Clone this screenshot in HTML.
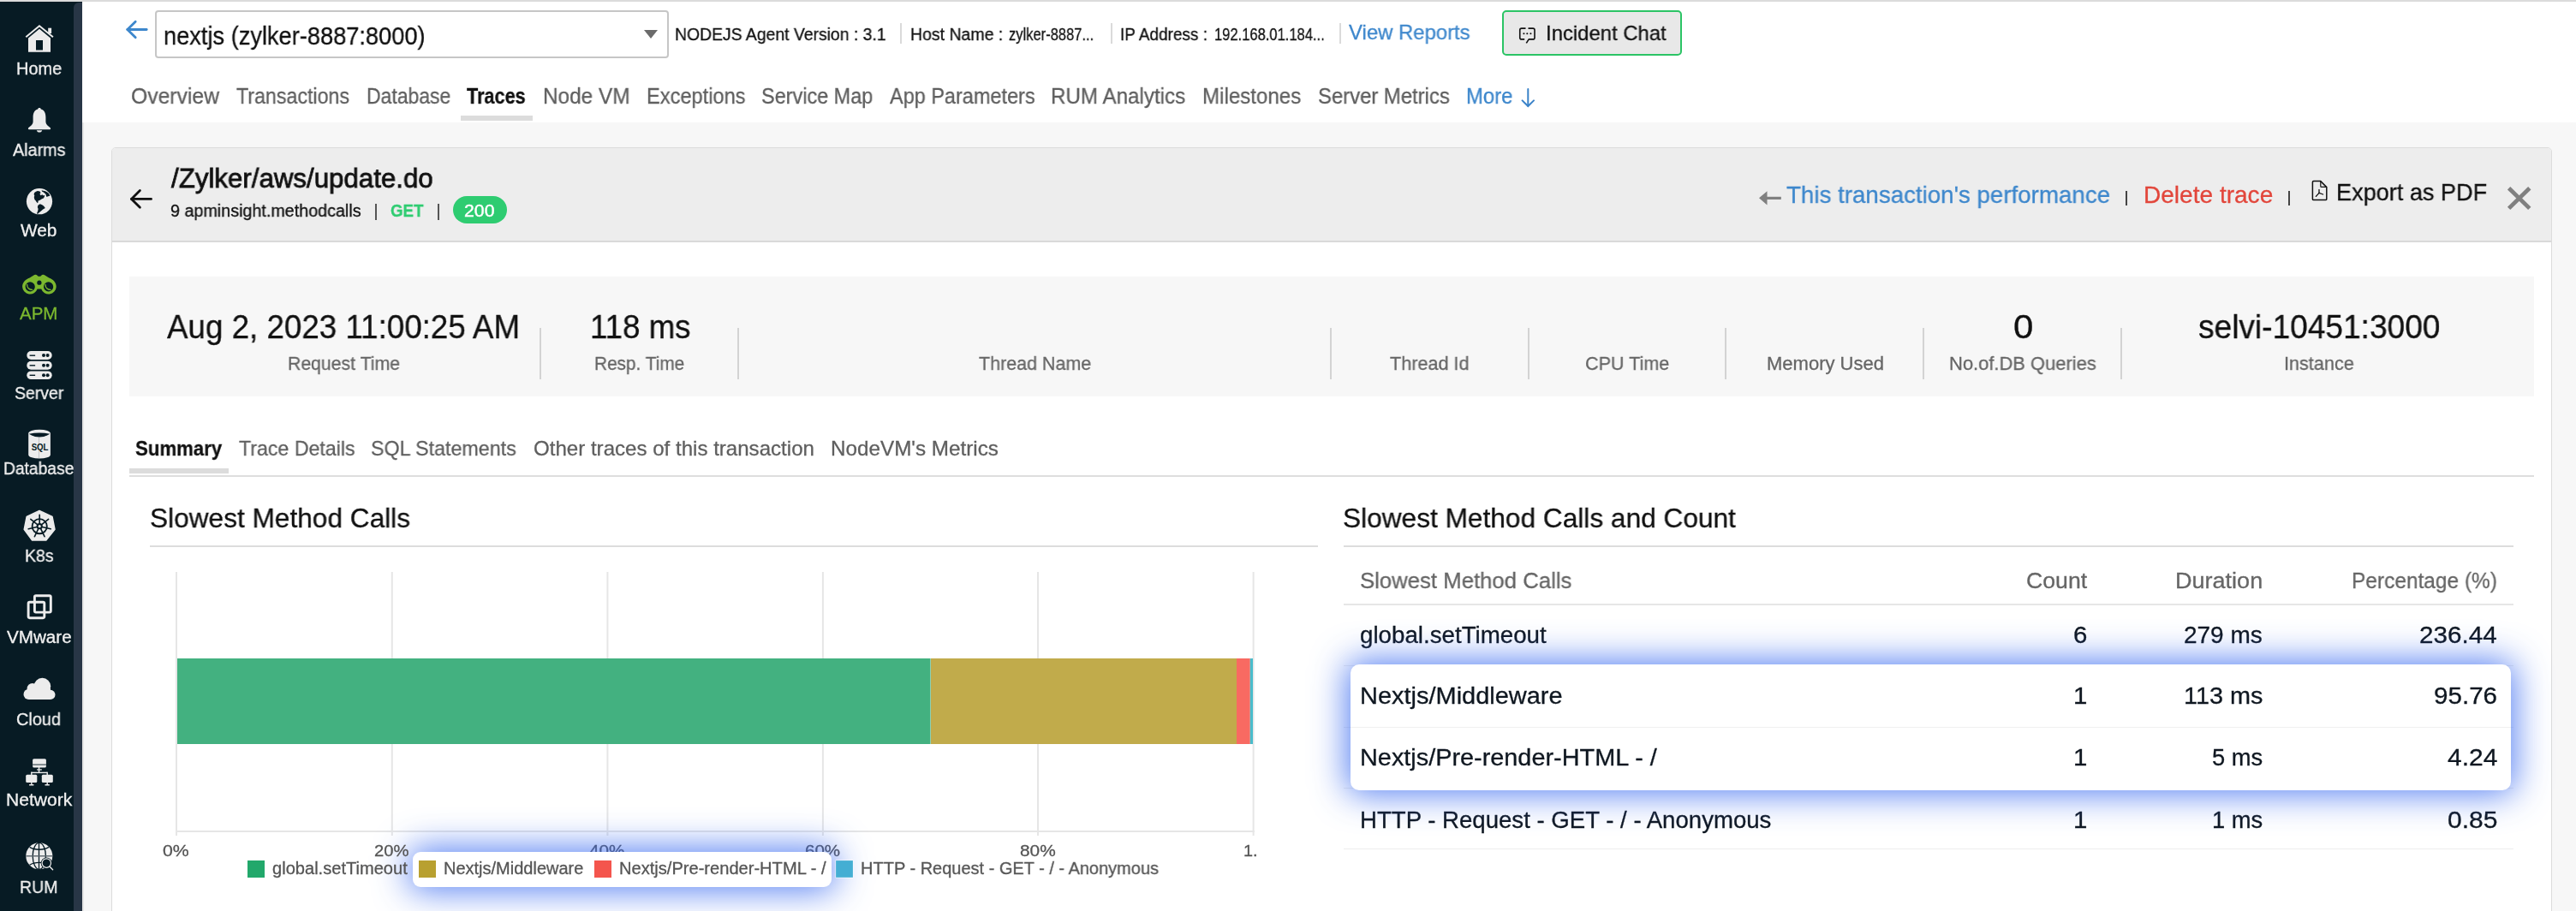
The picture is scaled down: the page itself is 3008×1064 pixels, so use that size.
<!DOCTYPE html>
<html><head><meta charset="utf-8">
<style>
html,body{margin:0;padding:0;}
body{width:3008px;height:1064px;overflow:hidden;position:relative;background:#f7f7f7;font-family:"Liberation Sans",sans-serif;}
.a{position:absolute;box-sizing:border-box;}
.tx{position:absolute;white-space:nowrap;line-height:1;transform-origin:0 0;font-family:"Liberation Sans",sans-serif;will-change:transform;-webkit-text-stroke:0.3px currentColor;}
svg{position:absolute;left:0;top:0;overflow:visible;}
</style></head><body>
<!-- top line -->
<div class="a" style="left:0;top:0;width:3008px;height:2px;background:#dbdbdb"></div>
<!-- sidebar -->
<div class="a" style="left:0;top:2px;width:96px;height:1062px;background:#071b24"></div>
<div class="a" style="left:86px;top:3px;width:10px;height:1061px;background:#283646;border-top-left-radius:6px"></div>
<div class="a" style="left:96px;top:143px;width:2px;height:921px;background:#e6e6e6"></div>
<!-- header white -->
<div class="a" style="left:96px;top:2px;width:2912px;height:141px;background:#fff"></div>
<!-- dropdown -->
<div class="a" style="left:181px;top:12px;width:600px;height:56px;border:2px solid #c6c6c6;border-radius:4px;background:#fff"></div>
<!-- separators -->
<div class="a" style="left:1051px;top:27px;width:2px;height:24px;background:#dadada"></div>
<div class="a" style="left:1297px;top:27px;width:2px;height:24px;background:#dadada"></div>
<div class="a" style="left:1564px;top:27px;width:2px;height:24px;background:#dadada"></div>
<!-- incident chat -->
<div class="a" style="left:1754px;top:12px;width:210px;height:53px;border:2px solid #2bc465;border-radius:5px;background:#e8e8e8"></div>
<!-- nav underline -->
<div class="a" style="left:538px;top:135px;width:84px;height:6px;background:#dcdcdc"></div>

<!-- trace panel -->
<div class="a" style="left:130px;top:172px;width:2850px;height:920px;border:1px solid #dcdcdc;border-radius:5px;background:#fff;overflow:hidden">
  <div class="a" style="left:0;top:0;width:2848px;height:110px;background:#ededed;border-bottom:2px solid #d9d9d9"></div>
</div>
<!-- pill -->
<div class="a" style="left:529px;top:229px;width:63px;height:32px;border-radius:16px;background:#2ecc71"></div>
<!-- pipes -->
<div class="a" style="left:438px;top:237.5px;width:2px;height:19px;background:#555"></div>
<div class="a" style="left:510.5px;top:237.5px;width:2px;height:19px;background:#555"></div>
<div class="a" style="left:2482px;top:223px;width:2px;height:17px;background:#444"></div>
<div class="a" style="left:2672px;top:223px;width:2px;height:17px;background:#444"></div>

<!-- stats box -->
<div class="a" style="left:151px;top:323px;width:2808px;height:140px;background:#f7f7f7"></div>
<div class="a" style="left:630px;top:383px;width:2px;height:60px;background:#d3d3d3"></div>
<div class="a" style="left:861px;top:383px;width:2px;height:60px;background:#d3d3d3"></div>
<div class="a" style="left:1553px;top:383px;width:2px;height:60px;background:#d3d3d3"></div>
<div class="a" style="left:1784px;top:383px;width:2px;height:60px;background:#d3d3d3"></div>
<div class="a" style="left:2014px;top:383px;width:2px;height:60px;background:#d3d3d3"></div>
<div class="a" style="left:2245px;top:383px;width:2px;height:60px;background:#d3d3d3"></div>
<div class="a" style="left:2476px;top:383px;width:2px;height:60px;background:#d3d3d3"></div>

<!-- summary tabs -->
<div class="a" style="left:151px;top:547px;width:116px;height:6px;background:#dcdcdc"></div>
<div class="a" style="left:151px;top:555px;width:2808px;height:2px;background:#dedede"></div>

<!-- section lines -->
<div class="a" style="left:175px;top:637px;width:1364px;height:2px;background:#dcdcdc"></div>
<div class="a" style="left:1569px;top:637px;width:1366px;height:2px;background:#dcdcdc"></div>

<!-- table lines -->
<div class="a" style="left:1569px;top:705px;width:1366px;height:2px;background:#e6e6e6"></div>
<div class="a" style="left:1569px;top:777px;width:1366px;height:1px;background:#eeeeee"></div>
<div class="a" style="left:1569px;top:849px;width:1366px;height:1px;background:#eeeeee"></div>
<div class="a" style="left:1569px;top:920px;width:1366px;height:1px;background:#eeeeee"></div>
<div class="a" style="left:1569px;top:991px;width:1366px;height:1px;background:#eeeeee"></div>

<!-- chart -->
<svg width="3008" height="1064" viewBox="0 0 3008 1064">
  <g stroke="#e6e6e6" stroke-width="2">
    <line x1="206" y1="668" x2="206" y2="976"/>
    <line x1="457.8" y1="668" x2="457.8" y2="976"/>
    <line x1="709.4" y1="668" x2="709.4" y2="976"/>
    <line x1="960.9" y1="668" x2="960.9" y2="976"/>
    <line x1="1212" y1="668" x2="1212" y2="976"/>
    <line x1="1463.6" y1="668" x2="1463.6" y2="976"/>
    <line x1="205" y1="971" x2="1465" y2="971"/>
  </g>
  <rect x="207" y="769" width="879.6" height="100" fill="#43b180"/>
  <rect x="1087" y="769" width="357" height="100" fill="#c1ab4b"/>
  <rect x="1444" y="769" width="15.8" height="100" fill="#f86a62"/>
  <rect x="1459.8" y="769" width="3.2" height="100" fill="#49bccb"/>
  <rect x="289" y="1005" width="20" height="20" fill="#22a86b"/>
</svg>

<!-- ICONS -->
<svg width="3008" height="1064" viewBox="0 0 3008 1064">
  <!-- home -->
  <g fill="#ececec">
    <path d="M30.3 43.2 L46 30.2 L61.9 43.2" stroke="#ececec" stroke-width="2" fill="none"/>
    <rect x="56.2" y="32.7" width="3.9" height="6.3"/>
    <path fill-rule="evenodd" d="M33 44.5 L46 33.8 L59 44.5 V60.8 H33 Z M42 47 V58.6 H50 V47 Z"/>
  </g>
  <!-- bell -->
  <path fill="#ececec" d="M46 126 C44.9 126 44.2 126.7 44.2 127.6 C40 128.8 38.6 132.5 38.6 137 V142 C38.6 145.8 35 147.6 33 149.4 C32.6 150.6 33.4 151.3 34.6 151.3 H57.4 C58.6 151.3 59.4 150.6 59 149.4 C57 147.6 53.4 145.8 53.4 142 V137 C53.4 132.5 52 128.8 47.8 127.6 C47.8 126.7 47.1 126 46 126 Z M42.8 152.2 C43.2 153.6 44.4 154.5 46 154.5 C47.6 154.5 48.8 153.6 49.2 152.2 Z"/>
  <!-- web globe -->
  <circle cx="46" cy="235.2" r="15.1" fill="#ececec"/>
  <g fill="#071b24">
    <path d="M40.2 225.1 C41.4 224 42.6 223.3 43.9 223 L46.5 223.6 L47.6 225.2 L46.4 226.3 L47.6 228.3 L49.4 227.2 L50.5 228.6 L52.2 227.8 L51.8 230 L50.8 231.5 L48.6 232.4 L46.7 233.8 L44.6 234.6 L44.4 236.6 L43.9 237.3 L42.5 235.8 L41.6 234.2 L40.7 233.6 L40 231.8 L39.8 230.1 L40.3 228.6 L39.6 227 Z"/>
    <path d="M48.5 222.3 C51.5 222.6 54.4 223.8 56.6 225.6 C57.4 226.6 58 227.7 58.3 228.8 L56.2 229.2 L54.5 230.1 L53.8 228.4 L53.6 226.9 L52 225.6 L50.8 224.6 L49.2 223.8 Z"/>
    <path d="M44.4 239.8 L46.7 238.2 L49.2 239.2 L51.2 240.8 L52.8 243 L50.2 244.6 L47.6 246.8 L45.4 248.6 L43.6 250.2 L43.2 248.8 L44.2 246.2 L44.6 244 L43.8 242 Z"/>
  </g>
  <!-- APM binoculars -->
  <path fill="#7cb82f" d="M26.1 334.9 C26.1 329.6 29.6 326.4 34.6 324.4 L39.4 321.6 C40.6 320.6 42.4 320.6 43.6 321.7 L44.6 322.8 H47.2 L48.2 321.7 C49.4 320.6 51.2 320.6 52.4 321.6 L57.2 324.4 C62.2 326.4 65.7 329.6 65.7 334.9 A9 9 0 0 1 48.2 337.4 H43.6 A9 9 0 0 1 26.1 334.9 Z"/>
  <g fill="#071b24">
    <circle cx="35.2" cy="334.9" r="5.6"/>
    <circle cx="56.6" cy="334.9" r="5.6"/>
    <circle cx="45.9" cy="330.2" r="2.6"/>
  </g>
  <g fill="none" stroke="#7cb82f" stroke-width="1.3" stroke-linecap="round">
    <path d="M31.6 332.4 C31.5 336 34 338.4 37.6 338.4"/>
    <path d="M53 332.4 C52.9 336 55.4 338.4 59 338.4"/>
  </g>
  <!-- server -->
  <g fill="#ececec">
    <rect x="31.3" y="410" width="29.4" height="10" rx="5"/>
    <rect x="31.3" y="421.8" width="29.4" height="9.9" rx="4.95"/>
    <rect x="31.3" y="433.4" width="29.4" height="9.7" rx="4.85"/>
  </g>
  <g fill="#071b24">
    <rect x="34.6" y="414.5" width="6.5" height="1.4"/><circle cx="51" cy="415.1" r="2"/><circle cx="55.6" cy="415.1" r="2"/>
    <rect x="34.6" y="426.1" width="6.5" height="1.4"/><circle cx="51" cy="426.8" r="2"/><circle cx="55.6" cy="426.8" r="2"/>
    <rect x="34.6" y="437.6" width="6.5" height="1.4"/><circle cx="51" cy="438.3" r="2"/><circle cx="55.6" cy="438.3" r="2"/>
  </g>
  <!-- database -->
  <path fill="#ececec" d="M33.2 506 A12.85 4.3 0 0 1 58.9 506 V531.3 A12.85 4.3 0 0 1 33.2 531.3 Z"/>
  <path fill="#071b24" d="M33.8 506.8 Q46 504.4 58.3 506.8 Q46 514.4 33.8 506.8 Z"/>
  <rect x="45.4" y="511" width="0.5" height="24" fill="#9aa0a4"/>
  <text x="46.6" y="526.4" text-anchor="middle" font-family="Liberation Sans" font-weight="700" font-size="11.5" fill="#071b24" textLength="19.8" lengthAdjust="spacingAndGlyphs">SQL</text>
  <!-- k8s -->
  <path fill="#ececec" stroke="#ececec" stroke-width="1.5" stroke-linejoin="round" d="M46 596.4 L61 603.4 L64 618.3 L53.8 631 H37.6 L28.2 618.3 L31.2 603.4 Z"/>
  <g stroke="#071b24" fill="none">
    <circle cx="46.2" cy="614.7" r="8.6" stroke-width="1.9"/>
    <g stroke-width="1.6" stroke-linecap="round">
      <line x1="46.2" y1="614.7" x2="46.2" y2="601.4"/>
      <line x1="46.2" y1="614.7" x2="56.6" y2="606.4"/>
      <line x1="46.2" y1="614.7" x2="59.2" y2="617.7"/>
      <line x1="46.2" y1="614.7" x2="52" y2="626.7"/>
      <line x1="46.2" y1="614.7" x2="40.4" y2="626.7"/>
      <line x1="46.2" y1="614.7" x2="33.2" y2="617.7"/>
      <line x1="46.2" y1="614.7" x2="35.8" y2="606.4"/>
    </g>
    <circle cx="46.2" cy="614.7" r="2.6" stroke-width="2" fill="#ececec"/>
  </g>
  <!-- vmware -->
  <g fill="none" stroke="#ececec" stroke-width="2.9">
    <rect x="40.4" y="695.8" width="18.9" height="19.3" rx="1.6"/>
    <rect x="33.1" y="703.2" width="18.7" height="18.5" rx="1.6"/>
  </g>
  <!-- cloud -->
  <g fill="#ececec">
    <circle cx="49.4" cy="801.6" r="9.8"/>
    <circle cx="37.8" cy="804.2" r="6.2"/>
    <circle cx="33.6" cy="810.9" r="6.1"/>
    <circle cx="58.9" cy="811.4" r="5.6"/>
    <rect x="33.6" y="804" width="25.3" height="13"/>
  </g>
  <!-- network -->
  <g fill="#ececec">
    <rect x="38.1" y="886.2" width="15.8" height="10.3" rx="1.6"/>
    <rect x="44.8" y="896" width="1.5" height="7"/>
    <rect x="43.1" y="898.3" width="5.7" height="1.3"/>
    <rect x="36.3" y="901.7" width="18.9" height="1.4"/>
    <rect x="36.1" y="901.7" width="1.4" height="3.5"/>
    <rect x="54.5" y="901.7" width="1.4" height="3.5"/>
    <rect x="30.2" y="904.8" width="13.1" height="9.2" rx="1.5"/>
    <rect x="48.8" y="904.8" width="13" height="9.2" rx="1.5"/>
    <rect x="36.1" y="913.5" width="1.4" height="3"/>
    <rect x="34.1" y="916" width="5.3" height="1.5"/>
    <rect x="54.5" y="913.5" width="1.4" height="3"/>
    <rect x="52.5" y="916" width="5.3" height="1.5"/>
  </g>
  <rect x="38.1" y="892.6" width="15.8" height="0.9" fill="#071b24"/>
  <!-- rum -->
  <circle cx="45.8" cy="999.8" r="15.5" fill="#ececec"/>
  <g stroke="#071b24" stroke-width="1.3" fill="none">
    <line x1="45.5" y1="984.3" x2="45.5" y2="1015.3"/>
    <ellipse cx="45.8" cy="999.8" rx="7.6" ry="15.5"/>
    <path d="M34.6 989.4 C40.5 993.2 51.1 993.2 57 989.4"/>
    <path d="M34.6 1010.2 C40.5 1006.4 51.1 1006.4 57 1010.2"/>
  </g>
  <line x1="30.3" y1="999.8" x2="61.3" y2="999.8" stroke="#5a646b" stroke-width="1.4"/>
  <circle cx="54.3" cy="1008.1" r="6.6" fill="#071b24"/>
  <circle cx="54.3" cy="1008.1" r="5.2" fill="none" stroke="#ececec" stroke-width="1.2"/>
  <line x1="58.2" y1="1012.3" x2="61.6" y2="1015.8" stroke="#ececec" stroke-width="1.4" stroke-linecap="round"/>

  <!-- header back arrow -->
  <g stroke="#3d87cc" stroke-width="2.8" stroke-linecap="round" stroke-linejoin="round" fill="none">
    <path d="M148.8 34.5 H171.2"/>
    <path d="M158.2 25.2 L148.8 34.5 L158.2 43.8"/>
  </g>
  <!-- dropdown triangle -->
  <path d="M752 35 H768 L760 45 Z" fill="#6b6b6b"/>
  <!-- incident chat icon -->
  <g fill="none" stroke="#111" stroke-width="1.6" stroke-linecap="butt" stroke-linejoin="round">
    <path d="M1781.5 33.1 H1776.8 Q1774.75 33.1 1774.75 35.1 V43.9 Q1774.75 45.9 1776.8 45.9 H1780.2"/>
    <path d="M1784.5 33.1 H1790 Q1792 33.1 1792 35.1 V43.9 Q1792 45.9 1790 45.9 H1785.2 L1782.3 50.4"/>
  </g>
  <g fill="#111"><circle cx="1779.4" cy="39.3" r="1.05"/><circle cx="1783.3" cy="39.3" r="1.05"/><circle cx="1787.4" cy="39.3" r="1.05"/></g>
  <!-- more arrow -->
  <g stroke="#3a82c8" stroke-width="2" fill="none" stroke-linecap="round">
    <path d="M1784.3 104 V123.5"/>
    <path d="M1777.6 117.4 L1784.3 124 L1791 117.4"/>
  </g>
  <!-- trace back arrow -->
  <g stroke="#111" stroke-width="2.8" fill="none" stroke-linecap="round" stroke-linejoin="round">
    <path d="M153.5 232.4 H176.5"/>
    <path d="M163.4 222.5 L153.5 232.4 L163.4 242.3"/>
  </g>
  <!-- gray perf arrow -->
  <g fill="#808080">
    <path d="M2054 231.3 L2063.5 223.2 V239.5 Z"/>
    <rect x="2062" y="229.8" width="17.8" height="3.2"/>
  </g>
  <!-- pdf icon -->
  <g fill="none" stroke="#111" stroke-width="1.5" stroke-linejoin="round">
    <path d="M2701.6 211.6 H2709.8 L2716.8 218.6 V232.4 Q2716.8 233.6 2715.6 233.6 H2701.6 Q2700.4 233.6 2700.4 232.4 V212.8 Q2700.4 211.6 2701.6 211.6 Z"/>
    <path d="M2709.8 211.8 V217.4 Q2709.8 218.4 2710.8 218.4 H2716.6" stroke-width="1.2"/>
  </g>
  <g fill="none" stroke="#111" stroke-width="1.3" stroke-linecap="round">
    <path d="M2708 221.6 V225.4"/>
    <path d="M2708 225.4 L2704.4 229.4"/>
    <path d="M2708 225.4 L2712.6 227"/>
  </g>
  <!-- close X -->
  <g stroke="#808080" stroke-width="4.8" stroke-linecap="butt">
    <path d="M2929.6 219.8 L2953.8 243.4"/>
    <path d="M2953.8 219.8 L2929.6 243.4"/>
  </g>
</svg>

<span class="tx" id="t0" style="left:19.3px;top:69.9px;font-size:20px;color:#f0f0f0;font-weight:400;transform:scaleX(0.9969);">Home</span>
<span class="tx" id="t1" style="left:14.5px;top:164.9px;font-size:20px;color:#f0f0f0;font-weight:400;transform:scaleX(0.9879);">Alarms</span>
<span class="tx" id="t2" style="left:24.0px;top:259.0px;font-size:20px;color:#f0f0f0;font-weight:400;transform:scaleX(1.0417);">Web</span>
<span class="tx" id="t3" style="left:23.0px;top:355.8px;font-size:20px;color:#7cb82f;font-weight:400;transform:scaleX(1.0253);">APM</span>
<span class="tx" id="t4" style="left:16.9px;top:449.1px;font-size:20px;color:#f0f0f0;font-weight:400;transform:scaleX(0.9737);">Server</span>
<span class="tx" id="t5" style="left:4.2px;top:537.0px;font-size:20px;color:#f0f0f0;font-weight:400;transform:scaleX(0.9628);">Database</span>
<span class="tx" id="t6" style="left:28.9px;top:639.0px;font-size:20px;color:#f0f0f0;font-weight:400;transform:scaleX(0.9736);">K8s</span>
<span class="tx" id="t7" style="left:7.6px;top:734.3px;font-size:20px;color:#f0f0f0;font-weight:400;transform:scaleX(1.0312);">VMware</span>
<span class="tx" id="t8" style="left:19.4px;top:829.6px;font-size:20px;color:#f0f0f0;font-weight:400;transform:scaleX(0.9928);">Cloud</span>
<span class="tx" id="t9" style="left:7.0px;top:924.3px;font-size:20px;color:#f0f0f0;font-weight:400;transform:scaleX(1.0535);">Network</span>
<span class="tx" id="t10" style="left:23.3px;top:1025.8px;font-size:20px;color:#f0f0f0;font-weight:400;transform:scaleX(0.9739);">RUM</span>
<span class="tx" id="t11" style="left:191.3px;top:27.2px;font-size:30px;color:#111;font-weight:400;transform:scaleX(0.9072);">nextjs (zylker-8887:8000)</span>
<span class="tx" id="t12" style="left:788.2px;top:30.0px;font-size:20px;color:#111;font-weight:400;transform:scaleX(0.9684);">NODEJS Agent Version : 3.1</span>
<span class="tx" id="t13" style="left:1063.2px;top:30.0px;font-size:20px;color:#111;font-weight:400;transform:scaleX(0.9739);">Host Name :</span>
<span class="tx" id="t14" style="left:1177.7px;top:30.0px;font-size:20px;color:#111;font-weight:400;transform:scaleX(0.8256);">zylker-8887...</span>
<span class="tx" id="t15" style="left:1308.2px;top:30.0px;font-size:20px;color:#111;font-weight:400;transform:scaleX(0.9491);">IP Address :</span>
<span class="tx" id="t16" style="left:1418.3px;top:30.0px;font-size:20px;color:#111;font-weight:400;transform:scaleX(0.8267);">192.168.01.184...</span>
<span class="tx" id="t17" style="left:1575.3px;top:26.3px;font-size:24px;color:#3d87cc;font-weight:400;transform:scaleX(0.9952);">View Reports</span>
<span class="tx" id="t18" style="left:1805.2px;top:26.7px;font-size:24px;color:#111;font-weight:400;transform:scaleX(0.9950);">Incident Chat</span>
<span class="tx" id="t19" style="left:153.3px;top:99.8px;font-size:25px;color:#5f5f5f;font-weight:400;transform:scaleX(0.9874);">Overview</span>
<span class="tx" id="t20" style="left:275.5px;top:99.8px;font-size:25px;color:#5f5f5f;font-weight:400;transform:scaleX(0.9280);">Transactions</span>
<span class="tx" id="t21" style="left:427.5px;top:99.8px;font-size:25px;color:#5f5f5f;font-weight:400;transform:scaleX(0.9188);">Database</span>
<span class="tx" id="t22" style="left:545.3px;top:99.8px;font-size:25px;color:#111;font-weight:700;transform:scaleX(0.8673);">Traces</span>
<span class="tx" id="t23" style="left:633.5px;top:99.8px;font-size:25px;color:#5f5f5f;font-weight:400;transform:scaleX(0.9734);">Node VM</span>
<span class="tx" id="t24" style="left:754.7px;top:99.8px;font-size:25px;color:#5f5f5f;font-weight:400;transform:scaleX(0.9443);">Exceptions</span>
<span class="tx" id="t25" style="left:889.3px;top:99.8px;font-size:25px;color:#5f5f5f;font-weight:400;transform:scaleX(0.9375);">Service Map</span>
<span class="tx" id="t26" style="left:1038.7px;top:99.8px;font-size:25px;color:#5f5f5f;font-weight:400;transform:scaleX(0.9388);">App Parameters</span>
<span class="tx" id="t27" style="left:1227.4px;top:99.8px;font-size:25px;color:#5f5f5f;font-weight:400;transform:scaleX(0.9673);">RUM Analytics</span>
<span class="tx" id="t28" style="left:1404.4px;top:99.8px;font-size:25px;color:#5f5f5f;font-weight:400;transform:scaleX(0.9643);">Milestones</span>
<span class="tx" id="t29" style="left:1538.7px;top:99.8px;font-size:25px;color:#5f5f5f;font-weight:400;transform:scaleX(0.9539);">Server Metrics</span>
<span class="tx" id="t30" style="left:1712.2px;top:99.8px;font-size:25px;color:#3d87cc;font-weight:400;transform:scaleX(0.9551);">More</span>
<span class="tx" id="t31" style="left:200.3px;top:191.6px;font-size:32px;color:#111;font-weight:400;transform:scaleX(0.9765);-webkit-text-stroke:0.8px #111;">/Zylker/aws/update.do</span>
<span class="tx" id="t32" style="left:198.7px;top:235.8px;font-size:20px;color:#111;font-weight:400;transform:scaleX(0.9862);">9 apminsight.methodcalls</span>
<span class="tx" id="t33" style="left:455.7px;top:235.8px;font-size:20px;color:#2ecc71;font-weight:700;transform:scaleX(0.9361);">GET</span>
<span class="tx" id="t34" style="left:542.4px;top:235.8px;font-size:20px;color:#fff;font-weight:400;transform:scaleX(1.0637);-webkit-text-stroke:0.4px #fff;">200</span>
<span class="tx" id="t35" style="left:2085.9px;top:213.9px;font-size:28px;color:#3d87cc;font-weight:400;transform:scaleX(0.9897);">This transaction's performance</span>
<span class="tx" id="t36" style="left:2502.7px;top:213.9px;font-size:28px;color:#e2463b;font-weight:400;transform:scaleX(1.0018);">Delete trace</span>
<span class="tx" id="t37" style="left:2727.7px;top:211.2px;font-size:28px;color:#111;font-weight:400;transform:scaleX(0.9676);">Export as PDF</span>
<span class="tx" id="t38" style="left:195.0px;top:362.7px;font-size:38px;color:#111;font-weight:400;transform:scaleX(0.9671);">Aug 2, 2023 11:00:25 AM</span>
<span class="tx" id="t39" style="left:336.1px;top:414.1px;font-size:22px;color:#666;font-weight:400;transform:scaleX(0.9651);">Request Time</span>
<span class="tx" id="t40" style="left:689.2px;top:362.7px;font-size:38px;color:#111;font-weight:400;transform:scaleX(0.9642);">118 ms</span>
<span class="tx" id="t41" style="left:694.4px;top:414.1px;font-size:22px;color:#666;font-weight:400;transform:scaleX(0.9452);">Resp. Time</span>
<span class="tx" id="t42" style="left:1142.8px;top:414.1px;font-size:22px;color:#666;font-weight:400;transform:scaleX(0.9755);">Thread Name</span>
<span class="tx" id="t43" style="left:1623.4px;top:414.1px;font-size:22px;color:#666;font-weight:400;transform:scaleX(0.9826);">Thread Id</span>
<span class="tx" id="t44" style="left:1851.2px;top:414.1px;font-size:22px;color:#666;font-weight:400;transform:scaleX(0.9798);">CPU Time</span>
<span class="tx" id="t45" style="left:2062.5px;top:414.1px;font-size:22px;color:#666;font-weight:400;transform:scaleX(1.0003);">Memory Used</span>
<span class="tx" id="t46" style="left:2350.7px;top:362.7px;font-size:38px;color:#111;font-weight:400;transform:scaleX(1.1049);">0</span>
<span class="tx" id="t47" style="left:2275.7px;top:414.1px;font-size:22px;color:#666;font-weight:400;transform:scaleX(0.9962);">No.of.DB Queries</span>
<span class="tx" id="t48" style="left:2567.2px;top:362.7px;font-size:38px;color:#111;font-weight:400;transform:scaleX(0.9759);">selvi-10451:3000</span>
<span class="tx" id="t49" style="left:2666.7px;top:414.1px;font-size:22px;color:#666;font-weight:400;transform:scaleX(0.9827);">Instance</span>
<span class="tx" id="t50" style="left:158.1px;top:512.2px;font-size:24px;color:#111;font-weight:700;transform:scaleX(0.9249);">Summary</span>
<span class="tx" id="t51" style="left:278.7px;top:512.2px;font-size:24px;color:#5f5f5f;font-weight:400;transform:scaleX(0.9649);">Trace Details</span>
<span class="tx" id="t52" style="left:433.3px;top:512.2px;font-size:24px;color:#5f5f5f;font-weight:400;transform:scaleX(0.9689);">SQL Statements</span>
<span class="tx" id="t53" style="left:622.7px;top:512.2px;font-size:24px;color:#5f5f5f;font-weight:400;transform:scaleX(1.0034);">Other traces of this transaction</span>
<span class="tx" id="t54" style="left:969.7px;top:512.2px;font-size:24px;color:#5f5f5f;font-weight:400;transform:scaleX(1.0102);">NodeVM's Metrics</span>
<span class="tx" id="t55" style="left:174.7px;top:588.6px;font-size:32px;color:#111;font-weight:400;transform:scaleX(0.9881);">Slowest Method Calls</span>
<span class="tx" id="t56" style="left:1568.3px;top:588.6px;font-size:32px;color:#111;font-weight:400;transform:scaleX(0.9885);">Slowest Method Calls and Count</span>
<span class="tx" id="t57" style="left:1588.2px;top:664.9px;font-size:26px;color:#666;font-weight:400;transform:scaleX(0.9894);">Slowest Method Calls</span>
<span class="tx" id="t58" style="left:2366.1px;top:664.9px;font-size:26px;color:#666;font-weight:400;transform:scaleX(1.0251);">Count</span>
<span class="tx" id="t59" style="left:2539.7px;top:664.9px;font-size:26px;color:#666;font-weight:400;transform:scaleX(1.0395);">Duration</span>
<span class="tx" id="t60" style="left:2745.7px;top:664.9px;font-size:26px;color:#666;font-weight:400;transform:scaleX(0.9408);">Percentage (%)</span>
<span class="tx" id="t61" style="left:1588.2px;top:728.5px;font-size:27px;color:#0f1720;font-weight:400;transform:scaleX(1.0264);">global.setTimeout</span>
<span class="tx" id="t62" style="left:2421.1px;top:728.5px;font-size:27px;color:#0f1720;font-weight:400;transform:scaleX(1.0877);">6</span>
<span class="tx" id="t63" style="left:2550.2px;top:728.5px;font-size:27px;color:#0f1720;font-weight:400;transform:scaleX(1.0360);">279 ms</span>
<span class="tx" id="t64" style="left:2825.4px;top:728.5px;font-size:27px;color:#0f1720;font-weight:400;transform:scaleX(1.0978);">236.44</span>
<span class="tx" id="t73" style="left:1588.2px;top:944.5px;font-size:27px;color:#0f1720;font-weight:400;transform:scaleX(1.0218);">HTTP - Request - GET - / - Anonymous</span>
<span class="tx" id="t74" style="left:2421.1px;top:944.5px;font-size:27px;color:#0f1720;font-weight:400;transform:scaleX(1.0877);">1</span>
<span class="tx" id="t75" style="left:2582.7px;top:944.5px;font-size:27px;color:#0f1720;font-weight:400;transform:scaleX(1.0114);">1 ms</span>
<span class="tx" id="t76" style="left:2857.7px;top:944.5px;font-size:27px;color:#0f1720;font-weight:400;transform:scaleX(1.1111);">0.85</span>
<span class="tx" id="t79" style="left:687.7px;top:983.6px;font-size:19px;color:#555;font-weight:400;transform:scaleX(1.0846);">40%</span>
<span class="tx" id="t80" style="left:939.7px;top:983.6px;font-size:19px;color:#555;font-weight:400;transform:scaleX(1.0791);">60%</span>
<!-- legend glow box -->
<div class="a" style="left:482px;top:995px;width:489px;height:41px;border-radius:9px;background:#fff;box-shadow:0 0 40px 4px rgba(55,105,240,0.85)"></div>
<svg width="3008" height="1064" viewBox="0 0 3008 1064">
  <rect x="489" y="1005" width="20" height="20" fill="#b8a030"/>
  <rect x="694" y="1005" width="20" height="20" fill="#f4554d"/>
  <rect x="975.6" y="1004.6" width="20.8" height="20.8" fill="#fff"/><rect x="976.1" y="1005.1" width="19.8" height="19.7" fill="#44aed3"/>
</svg>

<!-- table glow box -->
<div class="a" style="left:1577px;top:776px;width:1355px;height:147px;border-radius:10px;background:#fff;box-shadow:0 0 40px 4px rgba(55,105,240,0.85)"></div>
<div class="a" style="left:1577px;top:849px;width:1355px;height:1px;background:#f0f0f0"></div>


<span class="tx" id="t65" style="left:1588.2px;top:800.3px;font-size:27px;color:#0f1720;font-weight:400;transform:scaleX(1.0727);">Nextjs/Middleware</span>
<span class="tx" id="t66" style="left:2421.1px;top:800.3px;font-size:27px;color:#0f1720;font-weight:400;transform:scaleX(1.0877);">1</span>
<span class="tx" id="t67" style="left:2549.7px;top:800.3px;font-size:27px;color:#0f1720;font-weight:400;transform:scaleX(1.0665);">113 ms</span>
<span class="tx" id="t68" style="left:2842.0px;top:800.3px;font-size:27px;color:#0f1720;font-weight:400;transform:scaleX(1.0960);">95.76</span>
<span class="tx" id="t69" style="left:1588.2px;top:871.5px;font-size:27px;color:#0f1720;font-weight:400;transform:scaleX(1.0685);">Nextjs/Pre-render-HTML - /</span>
<span class="tx" id="t70" style="left:2421.1px;top:871.5px;font-size:27px;color:#0f1720;font-weight:400;transform:scaleX(1.0877);">1</span>
<span class="tx" id="t71" style="left:2582.7px;top:871.5px;font-size:27px;color:#0f1720;font-weight:400;transform:scaleX(1.0114);">5 ms</span>
<span class="tx" id="t72" style="left:2857.7px;top:871.5px;font-size:27px;color:#0f1720;font-weight:400;transform:scaleX(1.1111);">4.24</span>
<span class="tx" id="t77" style="left:189.7px;top:983.6px;font-size:19px;color:#555;font-weight:400;transform:scaleX(1.1176);">0%</span>
<span class="tx" id="t78" style="left:436.6px;top:983.6px;font-size:19px;color:#555;font-weight:400;transform:scaleX(1.0627);">20%</span>
<span class="tx" id="t81" style="left:1190.7px;top:983.6px;font-size:19px;color:#555;font-weight:400;transform:scaleX(1.0956);">80%</span>
<span class="tx" id="t82" style="left:1452.3px;top:983.6px;font-size:19px;color:#555;font-weight:400;transform:scaleX(1.0461);">1.</span>
<span class="tx" id="t83" style="left:318.2px;top:1004.1px;font-size:20px;color:#555;font-weight:400;transform:scaleX(1.0043);">global.setTimeout</span>
<span class="tx" id="t84" style="left:518.1px;top:1004.1px;font-size:20px;color:#555;font-weight:400;transform:scaleX(0.9994);">Nextjs/Middleware</span>
<span class="tx" id="t85" style="left:723.3px;top:1004.1px;font-size:20px;color:#555;font-weight:400;transform:scaleX(1.0045);">Nextjs/Pre-render-HTML - /</span>
<span class="tx" id="t86" style="left:1005.3px;top:1004.1px;font-size:20px;color:#555;font-weight:400;transform:scaleX(0.9992);">HTTP - Request - GET - / - Anonymous</span>
</body></html>
